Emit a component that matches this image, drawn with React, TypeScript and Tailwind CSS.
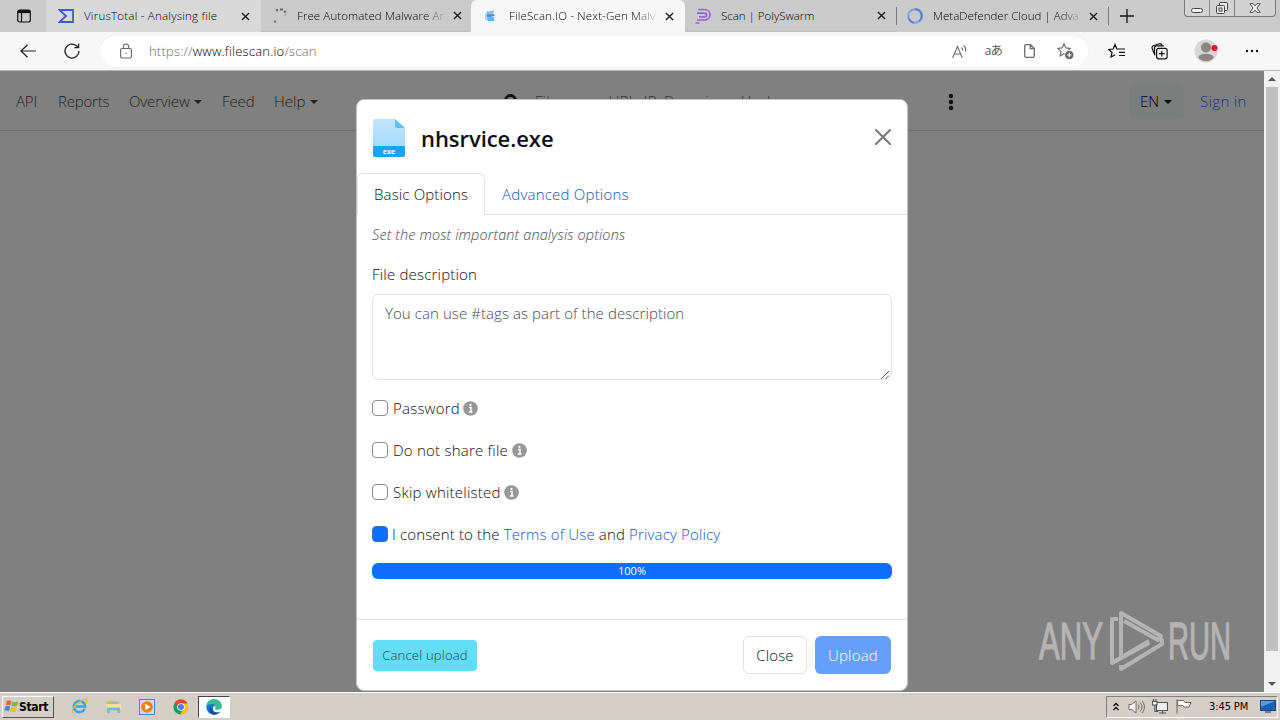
import type { ReactNode } from "react";
import clsx from "clsx";

function CloseIcon({ className }: { className?: string }) {
  return (
    <svg viewBox="0 0 10 10" className={clsx("size-[9px] shrink-0", className)} fill="none" stroke="#1a1a1a" strokeWidth="1.5">
      <path d="M1 1l8 8M9 1l-8 8" />
    </svg>
  );
}

function Tab({
  title,
  icon,
  className,
  textClass,
  fade,
}: {
  title: string;
  icon: ReactNode;
  className: string;
  textClass: string;
  fade?: boolean;
}) {
  return (
    <div className={clsx("flex h-full shrink-0 items-center", className)}>
      <span className="flex w-4 shrink-0 justify-center">{icon}</span>
      <span
        className={clsx(
          "shrink-0 whitespace-nowrap text-[11.5px] leading-5",
          textClass,
          fade && "[mask-image:linear-gradient(to_right,black_86%,rgba(0,0,0,0.15))]",
        )}
      >
        {title}
      </span>
      <CloseIcon />
    </div>
  );
}

function TabStrip() {
  return (
    <div className="flex h-8 items-stretch bg-[#cacaca] text-black">
      <div className="flex w-[46px] shrink-0 items-center pl-[17px]">
        <svg viewBox="0 0 14 14" className="size-[14px]" fill="none" stroke="#111" strokeWidth="1.2">
          <rect x=".7" y="1" width="12.6" height="12" rx="2" />
          <path d="M1 2.6h12" strokeWidth="3" />
          <path d="M4.5 3v10" />
        </svg>
      </div>

      <Tab
        title="VirusTotal - Analysing file"
        className="w-[215px] bg-[#d8d8d8] pl-[12px]"
        textClass="ml-[10px] w-[157px] tracking-[0.23px]"
        icon={
          <svg viewBox="0 0 16 14" className="h-[14px] w-4" fill="none" stroke="#4257d6" strokeWidth="1.8">
            <path d="M1.5 1h13.5v12H1.5l6.5-6z" />
          </svg>
        }
      />
      <Tab
        title="Free Automated Malware Ar"
        className="w-[210px] rounded-br-md border-b border-[#bdbdbd] pl-[11px]"
        textClass="ml-[9px] mr-[8px] w-[148px] tracking-[0.1px]"
        fade
        icon={
          <svg viewBox="0 0 16 16" className="size-4" fill="none" stroke="#666" strokeWidth="2">
            <path d="M4 2.5l2-.7M8 1.6h3M12 3l1.8 1.6" />
            <path d="M13 6.5l.6 1" stroke="#999" />
            <circle cx="3" cy="13.5" r=".6" stroke="#777" strokeWidth="1.4" />
          </svg>
        }
      />
      <Tab
        title="FileScan.IO - Next-Gen Malv"
        className="w-[214px] rounded-t-md bg-[#f7f7f7] pl-[11px]"
        textClass="ml-[11px] mr-[9px] w-[147px] tracking-[0.16px]"
        fade
        icon={
          <svg viewBox="0 0 16 16" className="size-4">
            <path d="M4.5 3.5l8-1-1 3-7 1z" fill="#85c0ea" />
            <path d="M3 6.5l8.5-.5 1.5 2-8 1.5z" fill="#3d8ed4" />
            <path d="M4.5 9.5l7-.5 1 4H6z" fill="#5fb0e6" />
            <path d="M3.5 4l2 5-.5 4-2-2z" fill="#a6d5f3" />
          </svg>
        }
      />
      <Tab
        title="Scan | PolySwarm"
        className="w-[211px] rounded-bl-md border-b border-[#bdbdbd] pl-[10px]"
        textClass="ml-[10px] w-[156px]"
        icon={
          <svg viewBox="0 0 16 16" className="size-4" fill="none" stroke="#8a6bd6" strokeWidth="1.7">
            <path d="M3 1.5h6c8 0 8 10.5 0 10.5H2M2 5.2h7c3.5 0 3.5 3.6 0 3.6H4M.5 15h4" />
          </svg>
        }
      />
      <div className="my-[7px] w-px bg-[#777]" />
      <Tab
        title="MetaDefender Cloud | Adva"
        className="w-[211px] pl-[10px]"
        textClass="ml-[10px] mr-[9px] w-[147px] tracking-[0.03px]"
        fade
        icon={
          <svg viewBox="0 0 16 16" className="size-4" fill="none" strokeWidth="2">
            <circle cx="8" cy="8" r="6.8" stroke="#7d9fe0" />
            <path d="M8 1.2a6.8 6.8 0 0 1 4.2 12.1M1.8 10.5a6.8 6.8 0 0 0 5.2 4.200" stroke="#5580d8" />
          </svg>
        }
      />
      <div className="my-[7px] w-px bg-[#777]" />
      <div className="flex w-[75px] shrink-0 items-center pl-[11px]">
        <svg viewBox="0 0 14 14" className="size-[14px]" stroke="#111" strokeWidth="1.3">
          <path d="M7 0v14M0 7h14" />
        </svg>
      </div>
      <div className="flex h-[17px] w-[92px] shrink-0 rounded-b border border-t-0 border-[#777] bg-[#d2d2d2]">
        <div className="flex w-[25px] items-end justify-center border-r border-[#888] pb-[3px]">
          <span className="h-[5px] w-3 rounded-sm border border-[#444] bg-white" />
        </div>
        <div className="flex w-[25px] items-center justify-center border-r border-[#888]">
          <svg viewBox="0 0 14 14" className="size-[14px]" fill="#eee" stroke="#444" strokeWidth="1">
            <rect x="4.5" y="1.5" width="8" height="8" rx="1" />
            <rect x="1.5" y="4.5" width="8" height="8" rx="1" />
            <rect x="4" y="7" width="3" height="3" />
          </svg>
        </div>
        <div className="flex flex-1 items-center justify-center">
          <svg viewBox="0 0 12 10" className="h-[10px] w-3" fill="#eee" stroke="#555" strokeWidth=".9">
            <path d="M.8.6h3.4L6 3 7.8.6h3.4L8 5l3.2 4.4H7.8L6 7 4.2 9.4H.8L4 5z" />
          </svg>
        </div>
      </div>
    </div>
  );
}

const star = "M7 .8l1.9 4.1 4.4.5-3.3 3 .9 4.5L7 10.7l-3.9 2.2.9-4.5-3.3-3 4.4-.5z";

function Toolbar() {
  return (
    <div className="flex h-[39px] items-center border-b border-[#b5b5b5] bg-[#f7f7f7]">
      <svg viewBox="0 0 16 14" className="ml-5 h-[14px] w-4" fill="none" stroke="#222" strokeWidth="1.2">
        <path d="M16 7H1M7.5.7L1 7l6.5 6.3" />
      </svg>
      <svg viewBox="0 0 16 16" className="ml-7 size-4" fill="none" stroke="#222" strokeWidth="1.3">
        <path d="M15 8a7 7 0 1 1-2.5-5.3L14.3 4.5M14.6.5v4.2h-4.2" />
      </svg>
      <div className="ml-5 flex h-[31px] w-[988px] items-center rounded-full bg-white pl-5 shadow-[0_0_2px_rgba(0,0,0,0.06)]">
        <svg viewBox="0 0 12 16" className="h-4 w-3" fill="none" stroke="#666" strokeWidth="1.1">
          <rect x=".6" y="5.5" width="10.8" height="9.5" rx="1.5" />
          <path d="M3.3 5.5V3.7a2.7 2.7 0 0 1 5.4 0v1.8" />
          <circle cx="6" cy="10.3" r=".7" fill="#666" stroke="none" />
        </svg>
        <span className="ml-[17px] pt-px text-[13px] tracking-[0.2px] text-[#666]">
          https://<span className="text-black">www.filescan.io</span>/scan
        </span>
        <div className="ml-auto flex items-center pr-[13px] text-[#5b5b5b]">
          <svg viewBox="0 0 16 15" className="h-[15px] w-4" fill="none" stroke="#6b6b6b" strokeWidth="1.1">
            <path d="M.6 14L5.5 2.5 10.3 14M2.2 10h6.5M9.500 3.5c1 .8 1.2 1.9 1 3M11.5 1.5c2 1.5 2.6 3.5 2 6" />
          </svg>
          <span className="ml-[17px] font-['Open_Sans','Noto_Sans_CJK_JP',sans-serif] text-[12.5px] font-normal leading-4 tracking-[-1px]">
            aあ
          </span>
          <svg viewBox="0 0 11 14" className="ml-[22px] h-[14px] w-[11px]" fill="none" stroke="#6b6b6b" strokeWidth="1.3">
            <path d="M.7 2A1.3 1.3 0 0 1 2 .7h4.5l3.8 3.8V12A1.3 1.3 0 0 1 9 13.3H2A1.3 1.3 0 0 1 .7 12zM6.3.9v3.8H10" />
          </svg>
          <svg viewBox="0 0 18 17" className="ml-[22px] h-[17px] w-[18px]" fill="none" stroke="#6b6b6b" strokeWidth="1.1">
            <path d={star} />
            <circle cx="12.3" cy="12" r="4.6" fill="#666" stroke="white" strokeWidth=".8" />
            <path d="M12.3 9.8v4.4M10.1 12h4.4" stroke="white" strokeWidth="1.2" />
          </svg>
        </div>
      </div>
      <svg viewBox="0 0 17 16" className="ml-5 h-4 w-[17px]" fill="none" stroke="#111" strokeWidth="1.2">
        <path d="M10 6H8.9L7 1.5 5.1 6l-4.4.5 3.3 3-.9 4.5L7 11.8M10 6h7M11 9.3h6M11 12.5h6" />
      </svg>
      <svg viewBox="0 0 17 17" className="ml-[26px] size-[17px]" fill="none" stroke="#111" strokeWidth="1.2">
        <path d="M4 12.2L1.2 5.5A2 2 0 0 1 2.3 2.8l6-2C9.7.4 10.6 1 11.2 2.7" />
        <path d="M12.8 2.9H5.5a2 2 0 0 0-2 2V11" />
        <rect x="5.6" y="5.3" width="10.5" height="10.5" rx="2" />
        <path d="M10.8 7.8v5.6M8 10.6h5.6" />
      </svg>
      <svg viewBox="0 0 24 24" className="ml-[26px] size-6">
        <circle cx="12" cy="12" r="11.5" fill="#d6d6d6" />
        <circle cx="12" cy="8.5" r="5" fill="#8a8580" />
        <path d="M4.5 18.5c0-5 15-5 15 0-3 5-12 5-15 0z" fill="#8a8580" />
        <circle cx="20.5" cy="9" r="3.1" fill="#e0182d" />
      </svg>
      <svg viewBox="0 0 14 4" className="ml-[27px] h-1 w-[14px]" fill="#111">
        <circle cx="2" cy="2" r="1.2" />
        <circle cx="7" cy="2" r="1.2" />
        <circle cx="12" cy="2" r="1.2" />
      </svg>
    </div>
  );
}

function Caret({ className }: { className?: string }) {
  return (
    <svg viewBox="0 0 8 4" className={clsx("h-1 w-2", className)} fill="currentColor">
      <path d="M0 0h8L4 4z" />
    </svg>
  );
}

function SiteHeader() {
  return (
    <header className="flex h-[60px] items-center border-b border-[#6e6e6e] pl-4 pt-[2px] text-[15px] text-[#222]">
      <span className="w-[42px] tracking-[-0.2px]">API</span>
      <span className="w-[71px] tracking-[-0.2px]">Reports</span>
      <span className="flex w-[93px] items-center tracking-[-0.15px]">
        Overview
        <Caret className="ml-[4px]" />
      </span>
      <span className="w-[52px] tracking-[-0.1px]">Feed</span>
      <span className="flex w-[230px] items-center">
        Help
        <Caret className="ml-[5px]" />
      </span>
      <svg viewBox="0 0 16 16" className="size-4" fill="none" stroke="#111" strokeWidth="2.8">
        <circle cx="6.5" cy="6.5" r="5" />
        <path d="M10 10l5 5" />
      </svg>
      <span className="ml-[15px] w-[413px] tracking-[0.15px] text-[#333]">File name, URL, IP, Domain or Hash</span>
      <svg viewBox="0 0 6 18" className="mr-auto h-[18px] w-[6px]" fill="#111">
        <circle cx="3" cy="3" r="2.2" />
        <circle cx="3" cy="9" r="2.2" />
        <circle cx="3" cy="15" r="2.2" />
      </svg>
      <span className="flex h-[35px] w-[55px] items-center rounded-md bg-[#7c7d7d] pl-[11px] text-black">
        EN
        <Caret className="ml-[5px]" />
      </span>
      <span className="ml-4 mr-4 w-[48px] whitespace-nowrap tracking-[0.35px] text-[#0c387d]">Sign in</span>
    </header>
  );
}

function OptionRow({ label }: { label: string }) {
  return (
    <div className="flex h-[42px] items-center">
      <span className="size-4 shrink-0 rounded-[4px] border border-[#8a8d91] bg-white" />
      <span className="ml-[5px] tracking-[0.23px]">{label}</span>
      <svg viewBox="0 0 15 15" className="ml-[3.5px] size-[15px]">
        <circle cx="7.5" cy="7.5" r="7.3" fill="#979797" />
        <path d="M6 6.6h2v4M5.8 11h3.7" stroke="white" strokeWidth="1.5" fill="none" />
        <circle cx="7.5" cy="3.9" r="1.1" fill="white" />
      </svg>
    </div>
  );
}

function UploadDialog() {
  return (
    <div className="flex h-[592px] w-[552px] flex-col rounded-lg border border-[#c4c4c4] bg-white text-[15px] leading-6 text-[#0c0f12]">
      <div className="flex h-[73px] shrink-0 items-center px-4">
        <svg viewBox="0 0 32 38" className="mt-[2px] h-[38px] w-8">
          <defs>
            <linearGradient id="sheet" x1="0" y1="0" x2="0" y2="1">
              <stop offset="0" stopColor="#c0e5fb" />
              <stop offset="1" stopColor="#a5dcfc" />
            </linearGradient>
          </defs>
          <path d="M2 0h20l10 9v18H0V2a2 2 0 0 1 2-2z" fill="url(#sheet)" />
          <path d="M22 0l10 9h-8a2 2 0 0 1-2-2z" fill="#67bdf2" />
          <path d="M0 27h32v9a2 2 0 0 1-2 2H2a2 2 0 0 1-2-2z" fill="#1aa3f3" />
          <text x="16" y="35" textAnchor="middle" fontSize="7" fontWeight="700" fill="white" className="font-['Open_Sans',sans-serif]">
            exe
          </text>
        </svg>
        <h5 className="ml-4 pt-[3px] text-[22px] font-semibold tracking-[-0.05px]">nhsrvice.exe</h5>
        <svg viewBox="0 0 16 16" className="ml-auto size-4" stroke="#777" strokeWidth="2" strokeLinecap="round">
          <path d="M1 1l14 14M15 1L1 15" />
        </svg>
      </div>

      <div className="flex h-[42px] shrink-0">
        <div className="w-[128px] rounded-t-md border border-b-0 border-[#dee2e6] pl-4 pt-[8px] tracking-[0.15px]">
          Basic Options
        </div>
        <div className="flex-1 border-b border-[#dee2e6] pl-[17px] pt-[9px] tracking-[0.22px] text-[#0058c4]">
          Advanced Options
        </div>
      </div>

      <div className="flex flex-1 flex-col px-[15px]">
        <p className="mt-[8px] text-[14.5px] italic tracking-[0.12px] text-[#434a51]">Set the most important analysis options</p>
        <p className="mt-[15px] tracking-[0.2px]">File description</p>
        <div className="relative mt-[8px] h-[86px] rounded-md border border-[#dee2e6] px-3 py-[6px] tracking-[0.08px] text-[#464c52]">
          You can use #tags as part of the description
          <svg viewBox="0 0 8 8" className="absolute bottom-0 right-0.5 size-2" stroke="#555" strokeWidth="1">
            <path d="M0 8l8-8M4.5 8L8 4.5" />
          </svg>
        </div>
        <div className="mt-[7px]">
          <OptionRow label="Password" />
          <OptionRow label="Do not share file" />
          <OptionRow label="Skip whitelisted" />
          <div className="flex h-[42px] items-center">
            <span className="size-4 shrink-0 rounded-[4px] border border-[#3d6fc0] bg-[#0d6efd]" />
            <span className="ml-1 whitespace-nowrap tracking-[0.15px]">
              I consent to the <span className="text-[#0c52c8]">Terms of Use</span> and{" "}
              <span className="text-[#0c52c8]">Privacy Policy</span>
            </span>
          </div>
        </div>
        <div className="mt-[8px] h-4 rounded-md bg-[#0d6efd] text-center text-[11px] font-normal leading-4 text-white">100%</div>
      </div>

      <div className="flex h-[71px] shrink-0 items-center border-t border-[#dee2e6] px-4">
        <button className="h-[31px] w-[104px] rounded bg-[#62ddf5] text-[13px] tracking-[0.2px] text-[#1d3f4a]">Cancel upload</button>
        <button className="ml-auto h-[38px] w-16 rounded-md border border-[#dee2e6] tracking-[0.15px]">Close</button>
        <button className="ml-2 h-[38px] w-[76px] rounded-md bg-[#649ffd] tracking-[0.2px] text-white">Upload</button>
      </div>
    </div>
  );
}

function Watermark() {
  return (
    <svg viewBox="0 0 198 62" className="h-[62px] w-[198px] font-['Liberation_Sans',sans-serif]" fill="none" stroke="#b4b4b4">
      <g fill="#b4b4b4" strokeWidth="1.3" fontSize="51">
        <text x="2" y="49" textLength="64" lengthAdjust="spacingAndGlyphs">ANY</text>
        <text x="131" y="49" textLength="63" lengthAdjust="spacingAndGlyphs">RUN</text>
      </g>
      <g strokeWidth="4" strokeLinejoin="round">
        <path d="M81 9h-6v44l37-22M84 47V3l40 23-3 4-34-19" />
        <path d="M84 55v4l41-25v-4l-4-3M112 33L75 53" />
      </g>
    </svg>
  );
}

function Scrollbar() {
  return (
    <div className="flex w-4 shrink-0 flex-col items-center justify-between bg-[#f1f1f1] py-[6px] text-[#555]">
      <Caret className="rotate-180" />
      <div className="mb-[31px] mt-[6px] w-3 flex-1 bg-[#c1c1c1]" />
      <Caret />
    </div>
  );
}

function Taskbar() {
  return (
    <div className="flex h-7 items-center border-t border-white bg-[#d5cec6] font-['DejaVu_Sans_Condensed','DejaVu_Sans',sans-serif] text-black">
      <div className="ml-[2px] flex h-[22px] w-[52px] items-center border border-b-[#555] border-l-white border-r-[#555] border-t-white pl-px">
        <svg viewBox="0 0 16 16" className="size-[15px] shrink-0">
          <path d="M3 2c2-1 3-1 5 .3L6.7 7C5 6 4 6 2 6.8z" fill="#e8622c" />
          <path d="M9 2.6c2 1 4 1 6.5 0L14 7.3c-2 1-4 1-6.3 0z" fill="#7cba3d" />
          <path d="M1.6 8c2-1 3-.8 5 0L5.3 13C4 12 2 12 .3 13z" fill="#3f86d4" />
          <path d="M7.5 8.4c2 1 4 1 6.2 0L12.3 13.5c-2 1-4 1-6.2 0z" fill="#f4bd29" />
        </svg>
        <span className="text-[12px] font-bold tracking-[-0.35px]">Start</span>
      </div>

      <svg viewBox="0 0 18 18" className="ml-[17px] size-[17px]" fill="none">
        <path d="M14.5 11.5A6 6 0 1 1 15 9H5" stroke="#3ba3dd" strokeWidth="2.6" />
        <path d="M2 15.5C-1 12 9 1.5 15.5 1.5c2 0 1.5 2.5.5 4" stroke="#e2b844" strokeWidth="1.3" />
      </svg>
      <svg viewBox="0 0 18 18" className="ml-[17px] size-[17px]">
        <path d="M1 3l6-1 1.5 1.5H16V9H1z" fill="#e5c765" />
        <path d="M3 4h11v3H3z" fill="#8fc98c" />
        <path d="M1 6.5h16v6H1z" fill="#f3e2a0" />
        <path d="M2 10h14v6h-3v-3H5v3H2z" fill="#78b5dc" />
      </svg>
      <svg viewBox="0 0 16 16" className="ml-[17px] size-4">
        <rect x=".5" y=".5" width="15" height="15" fill="#c7def3" stroke="#4a87c1" />
        <circle cx="8" cy="8" r="5.8" fill="#ee7d17" />
        <path d="M6.3 4.7L11.5 8l-5.2 3.3z" fill="white" />
      </svg>
      <svg viewBox="0 0 16 16" className="ml-[18px] size-4">
        <circle cx="8" cy="8" r="7.5" fill="#f4c20d" />
        <path d="M1.5 4.2A7.5 7.5 0 0 1 14.6 4.5H8z" fill="#db4437" />
        <path d="M1.5 4.2A7.5 7.5 0 0 0 7.2 15.5L10 10z" fill="#1a9a58" />
        <path d="M1.5 4.2A7.5 7.5 0 0 1 8 .5V5L5 9z" fill="#db4437" />
        <circle cx="8" cy="8" r="3.8" fill="white" />
        <circle cx="8" cy="8" r="3" fill="#4285f4" />
      </svg>
      <div className="ml-[9px] flex h-[22px] w-8 items-center justify-center border border-b-white border-l-[#444] border-r-white border-t-[#444] bg-white">
        <svg viewBox="0 0 16 16" className="size-4">
          <circle cx="8" cy="8" r="7.7" fill="#1479c9" />
          <path d="M.5 7C1 2 5 .3 8 .3c5 0 7.7 3.3 7.7 6.5 0 3-2.7 4-4.7 4-1.5 0-2.5-.7-1.6-1.7C10.6 7 8.5 5 6 5 3 5 1.2 6.3.5 7z" fill="#37bd8f" />
          <path d="M5.5 9c0 3.5 3.5 5.5 8.5 4A7.7 7.7 0 0 1 8 15.7C4 15 2.5 11 4 8.5z" fill="#124f91" />
          <path d="M9.4 9.1C8.4 10.1 9.5 10.8 11 10.8c2.5 0 4.7-1.3 4.7-3 .4 2.5-1 4.4-2.7 5.2-4 1-6-1-6-3.5 0-1.2.7-2.3 1.7-2.7 1 .5 1.3 1.5.7 2.3z" fill="white" />
        </svg>
      </div>

      <div className="ml-auto mr-[2px] flex h-[22px] w-[172px] items-center border border-b-white border-l-[#808080] border-r-white border-t-[#808080] pl-[6px]">
        <svg viewBox="0 0 6 9" className="h-[9px] w-[6px]" fill="none" stroke="#111" strokeWidth="1.3">
          <path d="M.5 4L3 1.5 5.5 4M.5 8L3 5.5 5.5 8" />
        </svg>
        <svg viewBox="0 0 17 14" className="ml-[9px] h-[14px] w-[17px]" fill="#fff" stroke="#666" strokeWidth="1">
          <path d="M1 4.5h2.5L8 1v12L3.5 9.5H1z" />
          <path d="M10 4.5c1.3 1.5 1.3 3.5 0 5M12 2.5c2.6 2.5 2.6 6.5 0 9M14 1c3.2 3.5 3.2 8.5 0 12" fill="none" />
        </svg>
        <svg viewBox="0 0 16 15" className="ml-[7px] h-[15px] w-4" fill="#eee" stroke="#555" strokeWidth="1.1">
          <path d="M4.5 3.5h11v8h-11zM7 14h7M10.5 12v2" />
          <path d="M1.5 0v3M4 0v3M2.8 6v6.5H6" fill="none" />
          <rect x=".5" y="2.5" width="4.5" height="3.5" fill="white" />
        </svg>
        <svg viewBox="0 0 16 15" className="ml-[8px] h-[15px] w-4" fill="white" stroke="#666" strokeWidth="1">
          <path d="M1 .5v14M1.5 1.5h6l1.5 2h6l-2 4.5H8L6.5 6.5h-5z" />
        </svg>
        <span className="ml-[17px] mt-[2px] w-[41px] whitespace-nowrap text-[11px] tracking-[-0.1px]">3:45 PM</span>
        <svg viewBox="0 0 16 13" className="ml-[10px] h-[13px] w-4">
          <rect x=".5" y=".5" width="15" height="10" fill="#1c5fbe" stroke="#24456f" />
          <path d="M1 1h14L1 7z" fill="#5c98e0" />
          <path d="M5 12h6" stroke="#667" strokeWidth="1.5" />
        </svg>
      </div>
    </div>
  );
}

export default function App() {
  return (
    <div className="flex h-[720px] w-[1280px] flex-col overflow-hidden bg-[#f7f7f7] font-['Open_Sans','Noto_Sans',sans-serif] font-[350]">
      <TabStrip />
      <Toolbar />
      <main className="relative flex h-[621px]">
        <div className="flex flex-1 flex-col bg-[#808080]">
          <SiteHeader />
          <div className="mt-auto self-end pb-[20px] pr-[29px]">
            <Watermark />
          </div>
        </div>
        <Scrollbar />
        <div className="absolute left-[356px] top-[28px]">
          <UploadDialog />
        </div>
      </main>
      <Taskbar />
    </div>
  );
}
